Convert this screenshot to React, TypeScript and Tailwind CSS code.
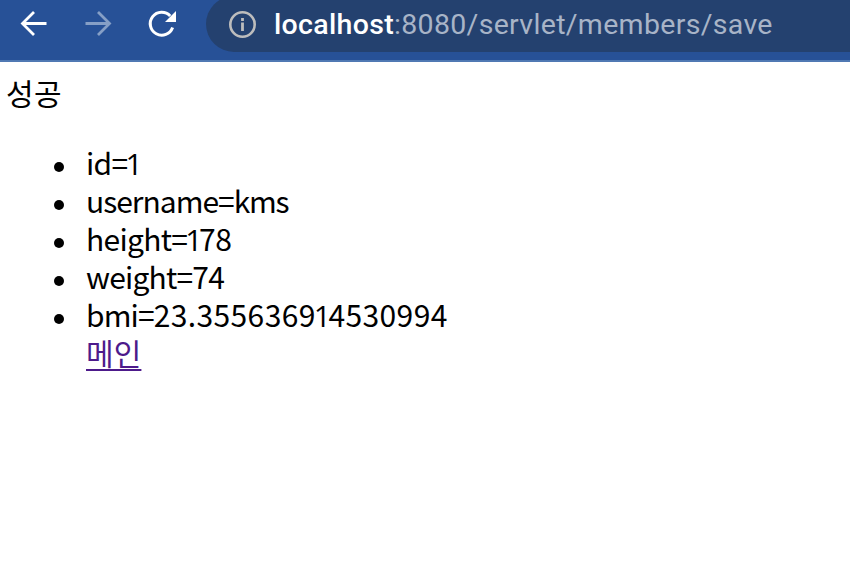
const members = [
  { name: 'id', value: '1', nameTracking: 'tracking-[-0.7px]', valueTracking: 'tracking-normal' },
  { name: 'username', value: 'kms', nameTracking: 'tracking-[-1px]', valueTracking: 'tracking-[-1.3px]' },
  { name: 'height', value: '178', nameTracking: 'tracking-[-0.7px]', valueTracking: 'tracking-[-0.4px]' },
  { name: 'weight', value: '74', nameTracking: 'tracking-[-0.8px]', valueTracking: 'tracking-[-0.8px]' },
  { name: 'bmi', value: '23.355636914530994', nameTracking: 'tracking-[-0.9px]', valueTracking: 'tracking-[0.4px]' },
];

function Value({ text }: { text: string }) {
  const [before, after] = text.split('1');
  if (after === undefined) return <>{text}</>;
  return (
    <>
      {before}
      <span className="-ml-[2px] -mr-[3px] font-['Open_Sans',sans-serif] leading-none">1</span>
      {after}
    </>
  );
}

function Toolbar() {
  return (
    <header className="flex h-[62px] items-start overflow-hidden border-b-2 border-[#5079b3] bg-[#275197]">
      <svg className="h-[60px] w-[206px] shrink-0" viewBox="0 0 206 60" fill="none">
        <path d="M46.5 23.5H22.5M34 12L22.5 23.5L34 35" stroke="#fff" strokeWidth="2.8" />
        <path d="M85.5 23.5H109.5M98 12L109.5 23.5L98 35" stroke="#869fc6" strokeWidth="2.8" />
        <path d="M172.6 27.5A11.5 11.5 0 1 1 170.2 15.9" stroke="#fff" strokeWidth="3" />
        <path d="M176 11V22H165Z" fill="#fff" />
      </svg>
      <div className="-mt-1 flex h-14 flex-1 items-center rounded-l-full bg-[#24416f] pl-[22px]">
        <svg className="h-7 w-7 shrink-0" viewBox="0 0 28 28" fill="none">
          <circle cx="14.5" cy="14.5" r="12.2" stroke="#bdbdbd" strokeWidth="2.6" />
          <path d="M14.5 12.5V21M14.5 8V11" stroke="#bdbdbd" strokeWidth="2.8" />
        </svg>
        <div className="ml-[18px] mt-[2px] whitespace-nowrap font-[Roboto,sans-serif] text-[28.5px] leading-8 tracking-[0.32px] text-[#a8b4c7]">
          <span className="font-medium text-white">localhost</span>:8080/servlet/members/save
        </div>
      </div>
    </header>
  );
}

export default function App() {
  return (
    <div className="h-[564px] overflow-hidden bg-white font-['Noto_Sans_CJK_KR',sans-serif] text-black">
      <Toolbar />
      <main className="pl-[6px] pt-[11px] text-[30px] leading-[38px]">
        <p className="tracking-[0.3px]">성공</p>
        <ul className="mt-8 pl-20">
          {members.map(({ name, value, nameTracking, valueTracking }) => (
            <li key={name} className="flex h-[38px] items-center whitespace-nowrap">
              <span className="-ml-8 mr-[22px] mt-[9px] h-[10px] w-[10px] shrink-0 rounded-full bg-black" />
              <span>
                <span className={nameTracking}>{name}=</span>
                <span className={valueTracking}><Value text={value} /></span>
              </span>
            </li>
          ))}
          <li className="flex h-[38px]">
            <a className="tracking-[0.1px] text-[#4d1a8b] underline decoration-2 underline-offset-4">메인</a>
          </li>
        </ul>
      </main>
    </div>
  );
}
